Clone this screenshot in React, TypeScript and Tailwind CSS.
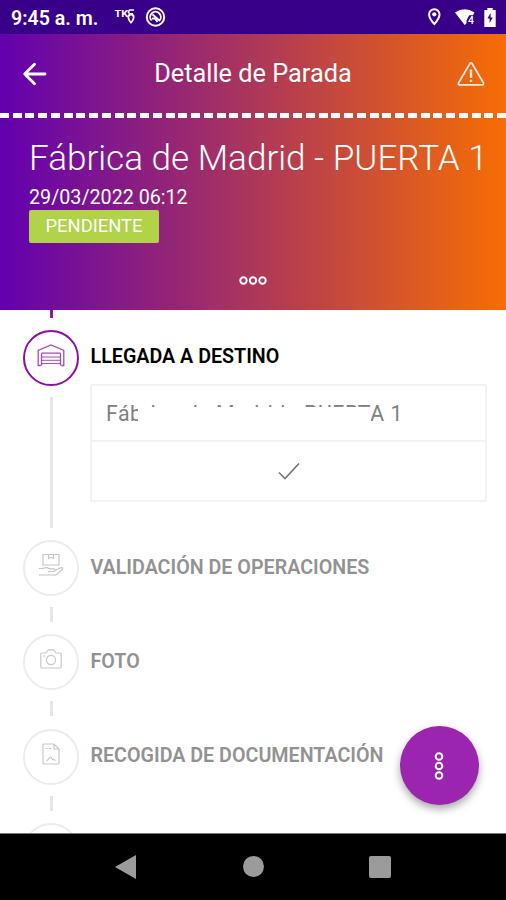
import type { ReactNode } from "react";

interface Step {
  id: string;
  label: string;
  icon: ReactNode;
}

const pendingSteps: Step[] = [
  { id: "validation", label: "VALIDACIÓN DE OPERACIONES", icon: <HandBoxIcon /> },
  { id: "photo", label: "FOTO", icon: <CameraIcon /> },
  { id: "docs", label: "RECOGIDA DE DOCUMENTACIÓN", icon: <DocumentIcon /> },
];

export default function App() {
  return (
    <div className="relative flex h-[900px] w-[506px] flex-col overflow-hidden bg-white font-['Roboto',sans-serif]">
      <StatusBar />

      <div className="flex h-[276px] shrink-0 flex-col bg-[linear-gradient(to_right,#6200b0,#f66d04)] text-white">
        <header className="flex h-[79px] shrink-0 items-center justify-between pl-[22px] pr-[20px]">
          <BackIcon />
          <h1 className="ml-[2px] text-[25.3px] leading-8 whitespace-nowrap">Detalle de Parada</h1>
          <WarningIcon />
        </header>
        <div className="h-[5px] shrink-0 bg-[repeating-linear-gradient(to_right,#fff_0px,#fff_9px,transparent_9px,transparent_12.75px)]" />

        {/* Stop summary */}
        <div className="flex flex-1 flex-col items-start pl-[29px] pt-[16px]">
          <h2 className="text-[35.1px] leading-[48px] font-light whitespace-nowrap">Fábrica de Madrid - PUERTA 1</h2>
          <p className="mt-[4px] text-[19.7px] leading-[24px] whitespace-nowrap">29/03/2022 06:12</p>
          <span className="flex h-[33px] w-[130px] items-center justify-center rounded-[2px] bg-[#b1d249] pb-px text-[18.4px]">
            PENDIENTE
          </span>
        </div>
        <div className="flex h-[37px] shrink-0 justify-center">
          <svg width="30" height="14" viewBox="0 0 30 14" fill="none" stroke="#fff" strokeWidth="2">
            <circle cx="5.5" cy="7.5" r="3.2" />
            <circle cx="15" cy="7.5" r="3.2" />
            <circle cx="24.5" cy="7.5" r="3.2" />
          </svg>
        </div>
      </div>

      {/* Timeline */}
      <main className="flex h-[523px] shrink-0 flex-col overflow-hidden pl-[23px]">
        <div className="ml-[26.5px] h-[8px] w-[3px] shrink-0 bg-[#8e18a3]" />
        <div className="mt-[12px] flex shrink-0">
          <div className="flex w-[56px] flex-col items-center">
            <div className="flex size-[56px] items-center justify-center rounded-full border-[2.5px] border-[#8b0fa0] pb-[7px]">
              <GarageIcon />
            </div>
            <div className="mt-[11px] h-[131px] w-[3px] bg-[#e6e6e6]" />
          </div>
          <div className="ml-[11px]">
            <h3 className="mt-[15px] ml-[0.5px] text-[19.7px] leading-6 font-semibold whitespace-nowrap text-black">LLEGADA A DESTINO</h3>
            <div className="mt-[15px] w-[397px] rounded-[2px] border-2 border-[#f2f2f2]">
              <div className="relative h-[56px] border-b-2 border-[#f2f2f2] pl-[14px] text-[21.3px] leading-[55px] tracking-[0.55px] whitespace-nowrap text-[#808080]">
                Fábrica de Madrid - PUERTA 1
                <div className="absolute top-[20.5px] left-[46px] h-[26px] w-[233px] bg-white" />
              </div>
              <div className="flex h-[58px] items-center justify-center">
                <CheckIcon />
              </div>
            </div>
          </div>
        </div>

        {pendingSteps.map((step) => (
          <div key={step.id} className="mt-[12px] flex h-[82.3px] shrink-0">
            <div className="flex w-[56px] flex-col items-center">
              <div className="flex size-[56px] shrink-0 items-center justify-center rounded-full border-[2.5px] border-[#ececec] pb-[6px]">
                {step.icon}
              </div>
              <div className="mt-[11px] h-[15px] w-[3px] shrink-0 bg-[#e6e6e6]" />
            </div>
            <h3 className="mt-[15.5px] ml-[11.5px] text-[19.7px] leading-6 font-semibold whitespace-nowrap text-[#929292]">{step.label}</h3>
          </div>
        ))}
        <div className="mt-[12px] size-[56px] shrink-0 rounded-full border-[2.5px] border-[#ececec]" />
      </main>

      <button
        type="button"
        aria-label="Más opciones"
        className="absolute top-[726px] left-[400px] flex size-[79px] items-center justify-center rounded-full bg-[#9c25b0] shadow-[0_4px_8px_rgba(0,0,0,0.35)]"
      >
        <svg width="13" height="30" viewBox="0 0 13 30" fill="none" stroke="#fff" strokeWidth="2">
          <circle cx="6" cy="5.5" r="3.3" />
          <circle cx="6" cy="15" r="3.3" />
          <circle cx="6" cy="24.5" r="3.3" />
        </svg>
      </button>

      <NavBar />
    </div>
  );
}

function StatusBar() {
  return (
    <div className="flex h-[34px] shrink-0 items-center bg-[#380089] text-white">
      <span className="mt-[3px] ml-[11px] w-[103px] text-[19.6px] font-semibold whitespace-nowrap">9:45 a. m.</span>
      {/* Notifications */}
      <svg width="54" height="24" viewBox="0 0 54 24" fill="none" stroke="#fff" strokeWidth="1.6">
        <text x="0.5" y="11.5" fontSize="9.5" fontWeight="700" textLength="13.5" lengthAdjust="spacingAndGlyphs" fill="#fff" stroke="none">
          TK
        </text>
        <path d="M20 5h-4.500l-1.200 2 1.200 1.800h3.500" />
        <path d="M17 9.500a2.700 2.700 0 0 0-2.700 2.700c0 2.400 2.700 5.500 2.700 5.500s2.700-3.100 2.700-5.500A2.700 2.700 0 0 0 17 9.500Z" strokeWidth="1.800" />
        <circle cx="41.5" cy="12" r="8.7" strokeWidth="2" />
        <path d="M37.500 15.500a5.300 5.300 0 1 1 8 0M38.500 9.500l7.500 6.500M38 13.500h3l2.500 3.500" strokeWidth="1.900" />
      </svg>
      {/* Location, wifi, battery */}
      <svg className="mr-[6px] ml-auto" width="75" height="24" viewBox="0 0 75 24" fill="none" stroke="#fff">
        <path d="M9.300 4.200a5.200 5.200 0 0 0-5.200 5.200c0 3.900 5.200 9.600 5.200 9.600s5.200-5.700 5.200-9.600a5.200 5.200 0 0 0-5.200-5.200Z" strokeWidth="2" />
        <circle cx="9.3" cy="9.3" r="2.1" fill="#fff" stroke="none" />
        <path d="M30 7.500q9.500-6.500 19.500 0L48 10.200h-3.800l-2.700 5v3L39.700 20Z" fill="#fff" stroke="none" />
        <text x="43" y="18.5" fontSize="10.5" fontWeight="500" fill="#fff" stroke="none">
          4
        </text>
        <path d="M59.300 5h3V3h5.400v2h3v17H59.300Z" fill="#fff" stroke="none" />
        <path d="m65.600 8-3.200 5.500h2.200V18l3.200-5.500h-2.200Z" fill="#380089" stroke="none" />
      </svg>
    </div>
  );
}

function NavBar() {
  return (
    <nav className="flex h-[67px] shrink-0 items-center justify-between border-t border-[#777] bg-black px-[115px] pb-px">
      <svg width="22" height="24" viewBox="0 0 22 24" fill="#9b9b9b">
        <path d="M0 12 21 0v24Z" />
      </svg>
      <div className="size-[21px] rounded-full bg-[#9b9b9b]" />
      <div className="size-[22px] rounded-[2px] bg-[#9b9b9b]" />
    </nav>
  );
}

function BackIcon() {
  return (
    <svg width="26" height="24" viewBox="0 0 26 24" fill="none" stroke="#fff" strokeWidth="2.8" strokeLinecap="round" strokeLinejoin="round">
      <path d="M23 12H3M12.500 2.200 2.700 12l9.800 9.800" />
    </svg>
  );
}

function WarningIcon() {
  return (
    <svg width="30" height="26" viewBox="0 0 30 26" fill="none" stroke="#ffe9df" strokeWidth="1.7">
      <path d="M14 2.500c.5-.8 1.500-.8 2 0l11.500 19.500c.5 1-.1 1.800-1 1.800h-23c-.9 0-1.500-.8-1-1.800Z" />
      <path d="M15 8.500v8.500M15 18.800v2.200" strokeWidth="2.400" />
    </svg>
  );
}

function GarageIcon() {
  return (
    <svg width="28" height="24" viewBox="0 0 28 24" fill="none" stroke="#a54bb5" strokeWidth="1.3">
      <path d="M3.800 22.500H1.200V7.500L14 2l12.800 5.500v15h-2.600" />
      <path d="M4.500 22.500V11q0-.8.800-.8h17.400q.8 0 .8.800v11.500" />
      <path d="M5 14h18M5 17.300h18M5 20.600h18" strokeWidth="1" />
    </svg>
  );
}

function HandBoxIcon() {
  return (
    <svg width="26" height="24" viewBox="0 0 26 24" fill="none" stroke="#c8c8c8" strokeWidth="1.2">
      <path d="M5 1.500h16V12H5zM10.500 1.500v4l2.500-1.200 2.500 1.200v-4" />
      <path d="M1 15.500h4c3-1.800 5-.8 6.500.3h4c2 0 1.800 2.700 0 2.700H10M16.500 17.500l6.200-2.800c1.800-.7 2.800 1.100 1.200 2.300l-5 4.200c-.7.6-1.500.8-2.500.8H1" />
    </svg>
  );
}

function CameraIcon() {
  return (
    <svg width="22" height="20" viewBox="0 0 22 20" fill="none" stroke="#c8c8c8" strokeWidth="1.2">
      <path d="M2 4h4l1.800-2.500q.4-.7 1.200-.7h4q.8 0 1.200.7L16 4h4q1.200 0 1.200 1.200v12.600q0 1.200-1.200 1.200H2q-1.200 0-1.200-1.200V5.200Q.8 4 2 4Z" />
      <circle cx="11" cy="11" r="4.6" />
      <path d="M3 7h2" />
    </svg>
  );
}

function DocumentIcon() {
  return (
    <svg width="18" height="22" viewBox="0 0 18 22" fill="none" stroke="#c8c8c8" strokeWidth="1.2">
      <path d="M2 1h10l5 5v14q0 1-1 1H2q-1 0-1-1V2q0-1 1-1Z" />
      <path d="M12 1v5h5M3.500 5.500h2M7 5.500h2M4.500 17.500c2 0 2.500-3.500 4-3.500s1 3 2.500 2.500 1.500 1 2.500 1" />
    </svg>
  );
}

function CheckIcon() {
  return (
    <svg width="22" height="18" viewBox="0 0 22 18" fill="none" stroke="#757575" strokeWidth="1.6">
      <path d="m1 10.500 6 6L21 1.500" />
    </svg>
  );
}
